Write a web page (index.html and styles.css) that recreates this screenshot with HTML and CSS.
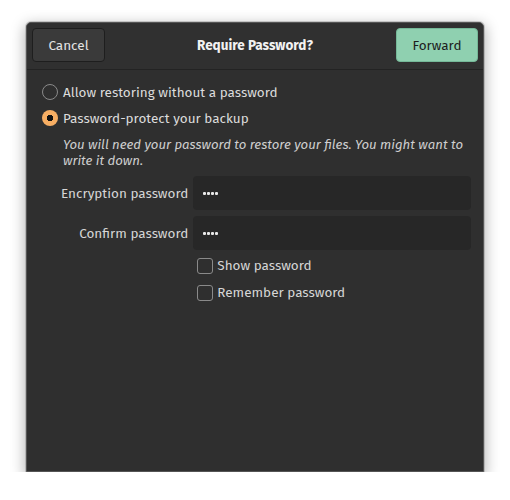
FILE: index.html
```html
<!DOCTYPE html>
<html>
<head>
<meta charset="utf-8">
<link rel="stylesheet" href="styles.css">
</head>
<body>
<div class="window">
  <div class="header">
    <div class="hleft"><button class="btn btn-cancel">Cancel</button></div>
    <div class="title">Require Password?</div>
    <div class="hright"><button class="btn btn-forward">Forward</button></div>
  </div>
  <div class="content">
    <label class="radio-row">
      <span class="radio"></span>
      <span>Allow restoring without a password</span>
    </label>
    <label class="radio-row">
      <span class="radio checked"></span>
      <span>Password-protect your backup</span>
    </label>
    <div class="note">You will need your password to restore your files. You might want to write it down.</div>
    <div class="form">
      <div class="field-label">Encryption password</div>
      <div class="entry"><span class="dot"></span><span class="dot"></span><span class="dot"></span><span class="dot"></span></div>
      <div class="field-label">Confirm password</div>
      <div class="entry entry-focus"><span class="dot"></span><span class="dot"></span><span class="dot"></span><span class="dot"></span></div>
      <div></div>
      <div class="checks">
        <label class="check-row"><span class="check"></span>Show password</label>
        <label class="check-row"><span class="check"></span>Remember password</label>
      </div>
    </div>
  </div>
</div>
</body>
</html>
```

FILE: styles.css
```css
html, body {
  margin: 0;
  padding: 0;
  background: #ffffff;
}
body {
  font-family: "Fira Sans", "Noto Sans", "Open Sans", sans-serif;
  font-size: 13.5px;
  color: #dcdcdc;
}
.window {
  margin: 22px 0 0 26px;
  width: 458px;
  height: 450px;
  box-sizing: border-box;
  background: #2f2f2f;
  border: 1px solid #555;
  border-radius: 5px 5px 0 0;
  box-shadow: 0 4px 14px 2px rgba(0,0,0,0.28), 0 0 0 1px rgba(0,0,0,0.15);
  display: flex;
  flex-direction: column;
}
.header {
  height: 47px;
  box-sizing: border-box;
  display: grid;
  grid-template-columns: 1fr auto 1fr;
  align-items: center;
  padding: 0 5px 2px;
  background: #303030;
  border-bottom: 1px solid #232323;
  border-radius: 5px 5px 0 0;
}
.hleft { display: flex; justify-content: flex-start; }
.hright { display: flex; justify-content: flex-end; }
.btn {
  font: inherit;
  height: 34px;
  border-radius: 4px;
  padding: 0;
}
.btn-cancel {
  width: 73px;
  background: #3a3a3a;
  border: 1px solid #1e1e1e;
  color: #e4e4e4;
}
.btn-forward {
  width: 82px;
  background: #8fd0b0;
  border: 1px solid #75b898;
  color: #1d1d1d;
}
.title {
  font-weight: bold;
  color: #f2f2f2;
}
.content {
  padding: 9px 6px 0 15px;
}
.radio-row {
  display: flex;
  align-items: center;
  gap: 5px;
  height: 26px;
}
.radio {
  width: 16px;
  height: 16px;
  box-sizing: border-box;
  border-radius: 50%;
  border: 1px solid #8a8a8a;
  flex: none;
}
.radio.checked {
  border: none;
  background: radial-gradient(circle, #111 0 3px, #f7ae63 3.5px);
}
.note {
  font-style: italic;
  font-size: 13.2px;
  color: #d0d0d0;
  margin: 6px 0 0 21px;
  line-height: 16px;
}
.form {
  display: grid;
  grid-template-columns: auto 1fr;
  column-gap: 5px;
  row-gap: 6px;
  margin-top: 7px;
  margin-left: 19px;
  margin-right: 6px;
  align-items: center;
}
.field-label {
  text-align: right;
  color: #d6d6d6;
}
.entry {
  height: 34px;
  box-sizing: border-box;
  background: #272727;
  border-radius: 4px;
  display: flex;
  align-items: center;
  gap: 1px;
  padding-left: 10px;
}
.dot {
  width: 3px;
  height: 3px;
  background: #e8e8e8;
  border-radius: 1px;
}
.checks {
  display: flex;
  flex-direction: column;
  gap: 8px;
  margin-top: 0;
  padding-left: 4px;
}
.check-row {
  display: flex;
  align-items: center;
  gap: 4px;
  height: 19px;
  color: #d6d6d6;
}
.check {
  width: 16px;
  height: 16px;
  box-sizing: border-box;
  border: 1px solid #8a8a8a;
  border-radius: 3px;
  flex: none;
}
```
